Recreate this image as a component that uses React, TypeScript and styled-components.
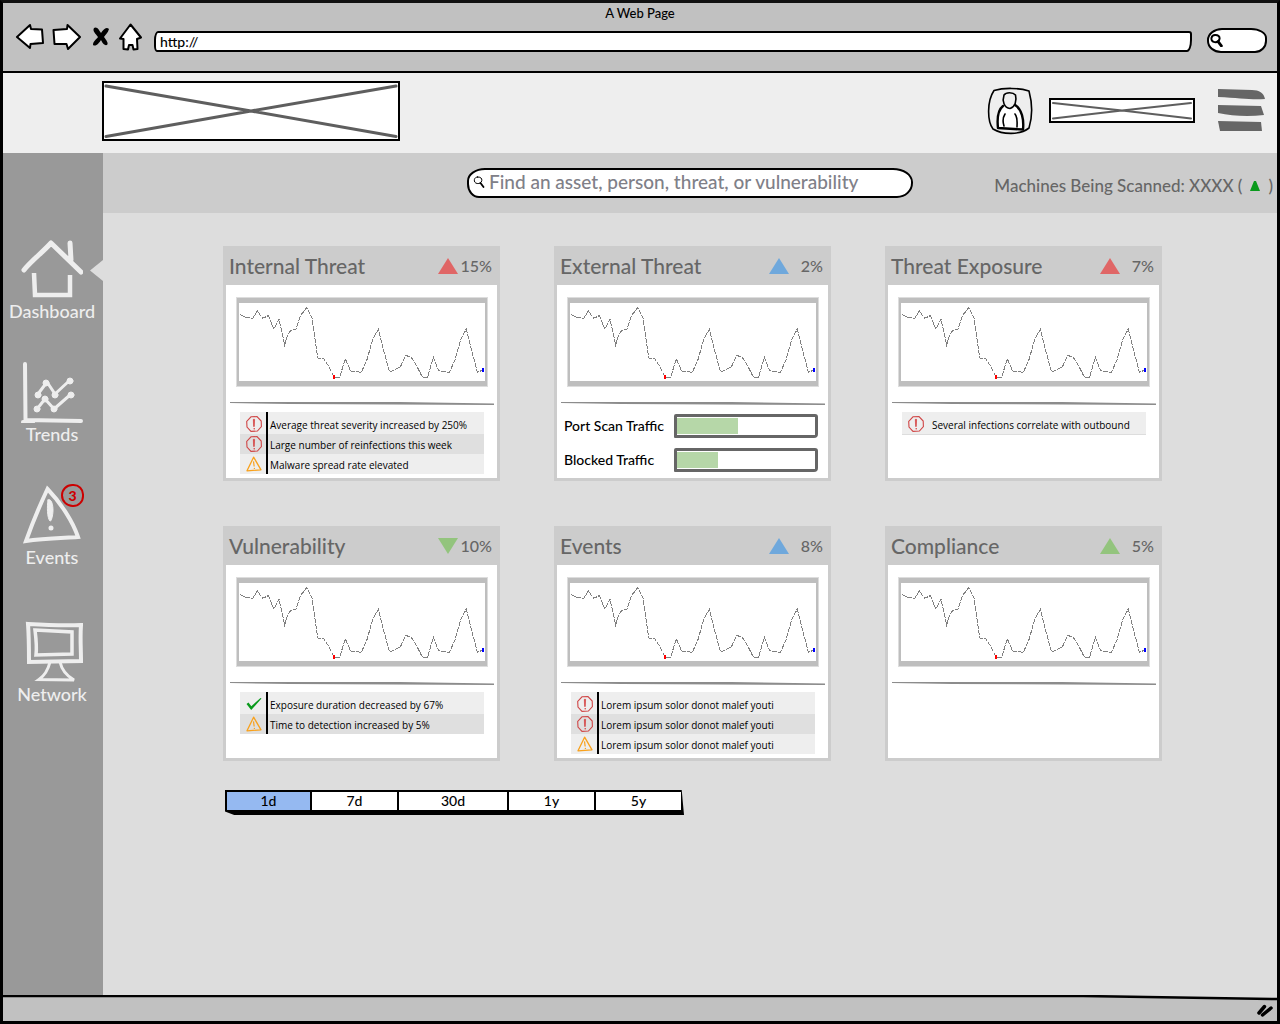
import React from "react";
import styled, { createGlobalStyle } from "styled-components";

const ink = "#000";
const grey = "#666";
const face = `Lato, "Open Sans", sans-serif`;

const GlobalStyle = createGlobalStyle`
  *, *::before, *::after { box-sizing: border-box; }
  body { margin: 0; background: #ddd; font-family: ${face}; font-weight: 500; color: ${ink}; }
  button, input { font: inherit; color: inherit; }
  button { background: none; border: 0; padding: 0; cursor: pointer; }
  svg { display: block; }
`;

const Window = styled.div`
  display: flex;
  flex-direction: column;
  min-height: 100vh;
  border: 3px solid ${ink};
  border-top-color: #111;
  background: #ddd;
`;

/* Browser chrome */
const Chrome = styled.header`
  height: 70px;
  flex: none;
  background: #c1c1c1;
  border-bottom: 2px solid ${ink};
`;
const PageTitle = styled.div`
  font-size: 13px;
  line-height: 20px;
  text-align: center;
`;
const Toolbar = styled.form`
  display: flex;
  align-items: center;
  padding: 0 10px 0 12px;
  height: 28px;
`;
const NavButtons = styled.div`
  display: flex;
  align-items: center;
  gap: 8px;
  width: 139px;
`;
const UrlInput = styled.input`
  flex: 1;
  min-width: 0;
  height: 21px;
  margin-top: 8px;
  padding: 0 4px;
  font-size: 14px;
  background: #fff;
  border: 2px solid ${ink};
  border-radius: 4px 3px 5px 3px / 9px 3px 12px 6px;
  outline: none;
`;
const QuickSearch = styled.label`
  display: flex;
  align-items: center;
  width: 60px;
  height: 25px;
  margin: 7px 0 0 15px;
  padding-left: 1px;
  background: #fff;
  border: 2px solid ${ink};
  border-radius: 15px 16px 12px 14px / 12px 10px 12px 12px;
`;
const QuickInput = styled.input`
  width: 36px;
  border: 0;
  background: none;
  outline: none;
`;

/* Application header */
const AppHeader = styled.div`
  display: flex;
  align-items: center;
  flex: none;
  height: 80px;
  padding: 0 12px 5px 99px;
  background: #eee;
`;
const Account = styled.div`
  display: flex;
  align-items: center;
  gap: 16px;
  margin-left: auto;
`;
const MenuButton = styled.button`
  margin: 0 0 0 7px;
`;

/* Body */
const Body = styled.div`
  display: flex;
  flex: 1;
`;
const Sidebar = styled.nav`
  display: flex;
  flex-direction: column;
  gap: 39px;
  width: 100px;
  flex: none;
  padding: 85px 2px 0 0;
  background: #999;
`;
const SideLink = styled.a<{ $active?: boolean; $apart?: boolean }>`
  position: relative;
  display: flex;
  flex-direction: column;
  align-items: center;
  margin-top: ${(p) => (p.$apart ? 14 : 0)}px;
  font-size: 18px;
  line-height: 22px;
  color: #eee;
  text-decoration: none;
  &::after {
    content: "";
    display: ${(p) => (p.$active ? "block" : "none")};
    position: absolute;
    right: -2px;
    top: 22px;
    width: 13px;
    height: 21px;
    background: #ddd;
    clip-path: polygon(0 50%, 100% 0, 100% 100%);
  }
`;
const CountBadge = styled.span`
  position: absolute;
  top: 0;
  right: 17px;
  width: 23px;
  height: 23px;
  border: 2px solid #c00;
  border-radius: 50% 46% 48% 52%;
  color: #c00;
  font-size: 14px;
  font-weight: 900;
  line-height: 19px;
  text-align: center;
`;
const Content = styled.div`
  flex: 1;
  min-width: 0;
`;
const SearchBar = styled.div`
  display: grid;
  grid-template-columns: 1fr minmax(200px, 446px) 1fr;
  align-items: center;
  height: 60px;
  background: #ccc;
`;
const SearchField = styled.label`
  display: flex;
  align-items: center;
  grid-column: 2;
  height: 30px;
  padding: 0 0 2px 4px;
  gap: 4px;
  background: #fff;
  border: 2px solid ${ink};
  border-radius: 18px 20px 16px 12px / 13px 14px 15px 14px;
`;
const SearchInput = styled.input`
  flex: 1;
  min-width: 0;
  padding: 0;
  border: 0;
  background: none;
  font-size: 19px;
  line-height: 22px;
  outline: none;
  &::placeholder { color: #808088; opacity: 1; }
`;
const ScanStatus = styled.p`
  display: flex;
  align-items: center;
  justify-self: end;
  gap: 8px;
  margin: 0;
  padding: 6px 4px 0 0;
  font-size: 17px;
  line-height: 20px;
  white-space: nowrap;
  color: ${grey};
`;

const Main = styled.main`
  padding: 33px 115px 40px 120px;
`;
const CardGrid = styled.div`
  display: grid;
  grid-template-columns: repeat(3, minmax(0, 1fr));
  gap: 45px 54px;
`;
const Card = styled.section`
  display: flex;
  flex-direction: column;
  min-height: 235px;
  background: #fff;
  border: 3px solid #ccc;
  border-top: 0;
`;
const CardHead = styled.header`
  display: flex;
  align-items: center;
  height: 39px;
  margin: 0 -3px;
  padding: 0 8px 0 6px;
  background: #ccc;
  color: ${grey};
`;
const CardTitle = styled.h2`
  flex: 1;
  margin: 0;
  font-size: 21px;
  font-weight: 500;
  line-height: 24px;
  white-space: nowrap;
`;
const Percent = styled.span`
  width: 34px;
  font-size: 16px;
  line-height: 24px;
  text-align: right;
`;
const ChartFrame = styled.div`
  height: 90px;
  margin: 12px 9px 15px 10px;
  padding: 5px 2px;
  background: #bebebe;
  border: 1px solid #ddd;
  svg { width: 100%; height: 78px; background: #fff; }
`;
const RuleBox = styled.div`
  height: 3px;
  margin: 0 3px 7px 4px;
  svg { width: 100%; height: 3px; }
`;

const AlertList = styled.ul<{ $plain?: boolean }>`
  margin: 0 13px 4px 14px;
  padding: 0;
  list-style: none;
  border-bottom: ${(p) => (p.$plain ? "1px solid #ddd" : "0")};
`;
const Alert = styled.li`
  display: flex;
  align-items: flex-end;
  height: 20px;
  background: #eee;
  font-family: "Open Sans", ${face};
  font-size: 10px;
  line-height: 18px;
  white-space: nowrap;
  &:nth-child(even) { background: #dfdfdf; }
  &:first-child { height: 22px; }
`;
const AlertIcon = styled.span<{ $plain?: boolean }>`
  display: flex;
  align-items: flex-end;
  align-self: stretch;
  width: 28px;
  margin-right: 2px;
  padding: 0 0 2px 6px;
  border-right: 2px solid ${(p) => (p.$plain ? "transparent" : ink)};
`;

const Meters = styled.div`
  display: flex;
  flex-direction: column;
  gap: 10px;
  padding: 2px 10px 0 7px;
`;
const MeterRow = styled.label`
  display: flex;
  align-items: center;
  justify-content: space-between;
  height: 24px;
  font-size: 14px;
  line-height: 20px;
  white-space: nowrap;
`;
const Meter = styled.progress`
  appearance: none;
  width: 144px;
  height: 24px;
  border: 3px solid ${grey};
  border-radius: 2px 3px 4px 1px;
  background: #fff;
  &::-webkit-progress-bar { background: #fff; }
  &::-webkit-progress-value { background: #b6d7a8; border: solid #fff; border-width: 1px 0; }
`;

/* Time range switch */
const RangeBar = styled.div`
  display: flex;
  width: fit-content;
  margin: 29px 0 0 2px;
  padding: 2px 3px 5px 2px;
  background: ${ink};
  clip-path: polygon(0 0, 99.5% 0, 100% 100%, 2% 100%, 0 86%);
`;
const RangeButton = styled.button<{ $wide?: boolean; $on?: boolean }>`
  width: ${(p) => (p.$wide ? 110 : 87)}px;
  height: 18px;
  font-size: 14px;
  line-height: 18px;
  background: ${(p) => (p.$on ? "#95b9f1" : "#fff")};
  & + & { border-left: 2px solid ${ink}; }
  &:first-child { width: 83px; }
`;

const StatusBar = styled.footer`
  position: relative;
  display: flex;
  align-items: center;
  justify-content: flex-end;
  flex: none;
  height: 26px;
  padding: 5px 4px 0 0;
  background: #c1c1c1;
`;
const SlopedEdge = styled.svg`
  position: absolute;
  inset: 0 0 auto 0;
  width: 100%;
  height: 6px;
`;

/* Drawings */
const Sketch = ({ w, h, children, sw = 2 }: { w: number; h: number; sw?: number; children: React.ReactNode }) => (
  <svg width={w} height={h} viewBox={`0 0 ${w} ${h}`} fill="none" stroke="currentColor"
    strokeWidth={sw} strokeLinejoin="round" strokeLinecap="round" aria-hidden="true">{children}</svg>
);

const Placeholder = ({ w, h, sw }: { w: number; h: number; sw: number }) => (
  <svg width={w} height={h} viewBox={`0 0 ${w} ${h}`} role="img" aria-label="Image placeholder">
    <rect x="1" y="1" width={w - 2} height={h - 2} fill="#fff" stroke="#000" strokeWidth="2" />
    <path d={`M4 5 L${w / 2} ${h / 2} L${w - 4} ${h - 4.5} M4 ${h - 4.5} L${w / 2} ${h / 2} L${w - 4} 5`}
      fill="none" stroke="#5e5e5e" strokeWidth={sw} strokeLinecap="round" />
  </svg>
);

const Glass = ({ size, sw }: { size: number; sw: number }) => (
  <svg width={size} height={size} viewBox="0 0 12 12" fill="none" stroke="#000" strokeLinecap="round" aria-hidden="true">
    <path d="M4.600 1 C7.500 .8 9.200 2.400 8.800 4.500 C8.400 7 6.500 7.800 4.200 7.500 C2 7.200 1 5.500 1.400 3.500 C1.800 1.900 3 1.100 4.600 1Z" strokeWidth={sw} />
    <path d="M7.500 7 L10.500 11" strokeWidth={sw + 0.8} />
  </svg>
);

const Trend = ({ color, down }: { color: string; down?: boolean }) => (
  <svg width="20" height="16" viewBox="0 0 20 16" aria-hidden="true">
    <path d={down ? "M0 0H20L10 16Z" : "M0 16H20L10 0Z"} fill={color} />
  </svg>
);

const points =
  "3,34 18,42 41,46 55,24 71,46 88,38 105,79 120,48 137,126 146,96 155,83 171,78 185,37 203,14 219,45 236,165 253,166 270,191 285,222 302,222 319,168 335,204 367,208 385,167 401,109 418,80 435,146 452,208 484,192 500,157 517,163 533,189 550,222 566,222 583,163 599,203 631,208 648,171 665,110 682,78 699,146 715,208 732,201";

const Chart = () => (
  <ChartFrame>
    <svg viewBox="0 0 738 234" preserveAspectRatio="none" role="img" aria-label="Trend over time" shapeRendering="crispEdges">
      <polyline points={points} fill="none" stroke="#808080" strokeWidth="1" vectorEffect="non-scaling-stroke" strokeDasharray="5 1" />
      <rect x="282" y="216" width="6" height="12" fill="#f00" />
      <rect x="729" y="195" width="6" height="12" fill="#00f" />
    </svg>
  </ChartFrame>
);

const Rule = () => (
  <RuleBox>
    <svg viewBox="0 0 264 3" preserveAspectRatio="none" aria-hidden="true">
      <path d="M0 0 L170 0 L264 1.500 V3 L60 2 L0 1Z" fill="#8c8c8c" />
    </svg>
  </RuleBox>
);

const marks = {
  stop: (
    <svg width="16" height="16" viewBox="0 0 16 16" fill="none" stroke="#d04545" aria-hidden="true">
      <path d="M5 .8 L11 .6 L15.2 5 L15.4 10.6 L11.4 15 L5 15.4 L1 11 L.7 5.4Z" strokeWidth="1.1" />
      <path d="M7.300 3.300 L8.600 3.300 L8.300 10.500 L7.600 10.500Z" fill="#d22" strokeWidth=".6" />
      <circle cx="8.2" cy="12.7" r=".7" fill="#d22" stroke="none" />
    </svg>
  ),
  warn: (
    <svg width="16" height="16" viewBox="0 0 16 16" fill="none" stroke="#f9a11b" strokeLinejoin="round" aria-hidden="true">
      <path d="M7.6 1.2 L15 13.8 L1 14.8Z" strokeWidth="1.3" />
      <path d="M7.5 5.3 L8.2 10.5" strokeWidth="1.2" />
      <circle cx="8.4" cy="12.4" r=".7" fill="#f9a11b" stroke="none" />
    </svg>
  ),
  ok: (
    <svg width="16" height="16" viewBox="0 0 16 16" aria-hidden="true">
      <path d="M.5 8 L2.5 6.6 L5.3 10.2 L14.5 2 L15.5 2.6 L5.2 14Z" fill="#0a9a1c" />
    </svg>
  ),
};

type Mark = keyof typeof marks;
interface CardData {
  title: string;
  percent: string;
  color: string;
  down?: boolean;
  plain?: boolean;
  alerts?: [Mark, string][];
  meters?: [string, number][];
}

const red = "#e06666";
const blue = "#6fa8dc";
const green = "#93c47d";
const lorem = "Lorem ipsum solor donot malef youti";

const cards: CardData[] = [
  { title: "Internal Threat", percent: "15%", color: red, alerts: [
    ["stop", "Average threat severity increased by 250%"],
    ["stop", "Large number of reinfections this week"],
    ["warn", "Malware spread rate elevated"]] },
  { title: "External Threat", percent: "2%", color: blue, meters: [["Port Scan Traffic", 44], ["Blocked Traffic", 30]] },
  { title: "Threat Exposure", percent: "7%", color: red, plain: true, alerts: [["stop", "Several infections correlate with outbound"]] },
  { title: "Vulnerability", percent: "10%", color: green, down: true, alerts: [
    ["ok", "Exposure duration decreased by 67%"],
    ["warn", "Time to detection increased by 5%"]] },
  { title: "Events", percent: "8%", color: blue, alerts: [["stop", lorem], ["stop", lorem], ["warn", lorem]] },
  { title: "Compliance", percent: "5%", color: green },
];

const MetricCard = ({ title, percent, color, down, plain, alerts, meters }: CardData) => (
  <Card>
    <CardHead>
      <CardTitle>{title}</CardTitle>
      <Trend color={color} down={down} />
      <Percent>{percent}</Percent>
    </CardHead>
    <Chart />
    <Rule />
    {alerts && (
      <AlertList $plain={plain}>
        {alerts.map(([mark, text], i) => (
          <Alert key={i}><AlertIcon $plain={plain}>{marks[mark]}</AlertIcon>{text}</Alert>
        ))}
      </AlertList>
    )}
    {meters && (
      <Meters>
        {meters.map(([name, value]) => (
          <MeterRow key={name}>{name}<Meter max={100} value={value} /></MeterRow>
        ))}
      </Meters>
    )}
  </Card>
);

const ranges = ["1d", "7d", "30d", "1y", "5y"];

export default function App() {
  const [range, setRange] = React.useState("1d");
  return (
    <Window>
      <GlobalStyle />
      <Chrome>
        <PageTitle>A Web Page</PageTitle>
        <Toolbar onSubmit={(e) => e.preventDefault()}>
          <NavButtons>
            <button type="button" aria-label="Back">
              <Sketch w={29} h={28}><path fill="#fff" d="M2 14 L15 2 L16 6 L27 6.5 L28 20 L15.5 21 L15 25Z" /></Sketch>
            </button>
            <button type="button" aria-label="Forward">
              <Sketch w={29} h={28}><path fill="#fff" d="M1.5 7 L15 6 L15.5 2 L28 14 L16 26 L14.5 21 L2.5 21Z" /></Sketch>
            </button>
            <button type="button" aria-label="Stop">
              <svg width="22" height="24" viewBox="0 0 22 24" aria-hidden="true">
                <path d="M5 3 C8 1 10 5 12 8 C14 5 17 1 20 4 C19 8 16 10 15 12 C17 15 20 18 18 20 C15 21 13 17 12 15 C10 18 7 22 4 20 C4 16 8 14 9 12 C7 9 3 6 5 3Z" />
              </svg>
            </button>
            <button type="button" aria-label="Home">
              <Sketch w={23} h={28}><path fill="#fff" d="M11.5 1.5 L22 14.5 L18 16 L18.5 26 L14.5 26.5 L13.5 22 L10 22 L9 26.5 L4.5 26 L4.5 16 L1 15.5Z" /></Sketch>
            </button>
          </NavButtons>
          <UrlInput aria-label="Address" defaultValue="http://" />
          <QuickSearch aria-label="Quick search"><Glass size={13} sw={1.8} /><QuickInput type="text" /></QuickSearch>
        </Toolbar>
      </Chrome>

      <AppHeader>
        <Placeholder w={298} h={60} sw={3} />
        <Account>
          <Sketch w={46} h={48} sw={1.6}>
            <path d="M7 3.5 C17 .5 32 .8 42 4 C45 15 46 28 42 41 C33 48 16 48 6 42 C0 34 0 14 7 3.5Z" />
            <path fill="#fff" strokeWidth="2.4" d="M16 19 C11 23 10 32 11 41 L36 42.5 C37 33 35 22 28 18" />
            <path fill="#eee" d="M17 8 C19 5 26 5 28.5 8 C30 14 28 20 23 21.5 C17 21 15 14 17 8Z" />
            <path d="M18 27 C15.500 31 16 36 17 39 M28 27 C31 31 30 36 30 40" />
          </Sketch>
          <Placeholder w={146} h={25} sw={2} />
          <MenuButton aria-label="Menu">
            <svg width="47" height="43" viewBox="0 0 47 43" fill="#666" aria-hidden="true">
              <path d="M0 0 L34 1 C41 1 46 4 47 10 C33 11 22 9 0 8Z" />
              <path d="M0 16 L43 17 L46 26 C30 28 14 27 0 24Z" />
              <path d="M0 32 L43 33 L44 42 L2 42Z" />
            </svg>
          </MenuButton>
        </Account>
      </AppHeader>

      <Body>
        <Sidebar aria-label="Main">
          <SideLink href="#dashboard" $active>
            <Sketch w={62} h={62} sw={4.5}>
              <path strokeWidth="5" d="M3 32 C10 23 22 14 30 5 L60 34 M49 5 L50 22" />
              <path strokeLinecap="butt" strokeLinejoin="miter" d="M13 35 L14 57 H49 L49 37" />
            </Sketch>
            Dashboard
          </SideLink>
          <SideLink href="#trends">
            <Sketch w={62} h={62} sw={4}>
              <path d="M4 3 L4.500 59 L60 60 M2 61 H12" />
              <path strokeWidth="3" d="M17 33 L26 21 L34 33 L48 20 M16 48 L24 38 L33 48 L49 34" />
              <g fill="currentColor" strokeWidth="1">
                <circle cx="17" cy="34" r="3" /><circle cx="25" cy="22" r="3" /><circle cx="34" cy="34" r="3" /><circle cx="49" cy="20" r="3" />
                <circle cx="16" cy="48" r="3" /><circle cx="24" cy="38" r="3" /><circle cx="33" cy="48" r="3" /><circle cx="50" cy="34" r="3" />
              </g>
            </Sketch>
            Trends
          </SideLink>
          <SideLink href="#events">
            <Sketch w={62} h={62} sw={4}>
              <path strokeLinejoin="miter" strokeLinecap="butt" d="M26.500 5 C19 21 11 40 5 57 C22 54 40 54 57 53 C52 38 40 19 26.500 5Z" />
              <path fill="currentColor" strokeWidth="1" d="M27 16 C30 14 32 20 32 26 C32 32 30 38 29 37 C26 34 26 22 27 16Z" />
              <circle cx="30" cy="44" r="1.500" fill="currentColor" strokeWidth="2" />
            </Sketch>
            <CountBadge>3</CountBadge>
            Events
          </SideLink>
          <SideLink href="#network" $apart>
            <Sketch w={62} h={62} sw={4}>
              <g strokeLinejoin="miter" strokeLinecap="butt">
                <path d="M7 3 C24 4 42 5 60 4 C59 16 60 28 60 40 L8 41 C8 28 8 16 7 3Z" />
                <path strokeWidth="3.500" d="M14 9 L51 11 L51 33 L15 34 C16 26 15 17 14 9Z" />
                <path strokeWidth="3" d="M29 41 C27 49 23 55 18 58.500 L53 59 C46 55 41 50 39 41" />
              </g>
            </Sketch>
            Network
          </SideLink>
        </Sidebar>

        <Content>
          <SearchBar>
            <SearchField aria-label="Search">
              <Glass size={12} sw={1} />
              <SearchInput type="text" placeholder="Find an asset, person, threat, or vulnerability" />
            </SearchField>
            <ScanStatus>
              Machines Being Scanned: XXXX (
              <svg width="10" height="10" viewBox="0 0 10 10" aria-label="up"><path d="M0 10 L4 0 H6 L10 10Z" fill="#0a9a1c" /></svg>
              <span>)</span>
            </ScanStatus>
          </SearchBar>
          <Main>
            <CardGrid>{cards.map((c) => <MetricCard key={c.title} {...c} />)}</CardGrid>
            <RangeBar role="group" aria-label="Time range">
              {ranges.map((r) => (
                <RangeButton key={r} $on={r === range} $wide={r === "30d"} aria-pressed={r === range} onClick={() => setRange(r)}>{r}</RangeButton>
              ))}
            </RangeBar>
          </Main>
        </Content>
      </Body>

      <StatusBar>
        <SlopedEdge viewBox="0 0 1274 6" preserveAspectRatio="none" aria-hidden="true">
          <path d="M0 0 H1274 V4 L1100 0Z" fill="#ddd" />
          <path d="M0 1 H1080 L1274 4" fill="none" stroke="#000" strokeWidth="2.500" />
        </SlopedEdge>
        <Sketch w={16} h={13} sw={3.5}><path d="M2 9 L7.500 2.500 M5.500 11 L14 4" /></Sketch>
      </StatusBar>
    </Window>
  );
}
